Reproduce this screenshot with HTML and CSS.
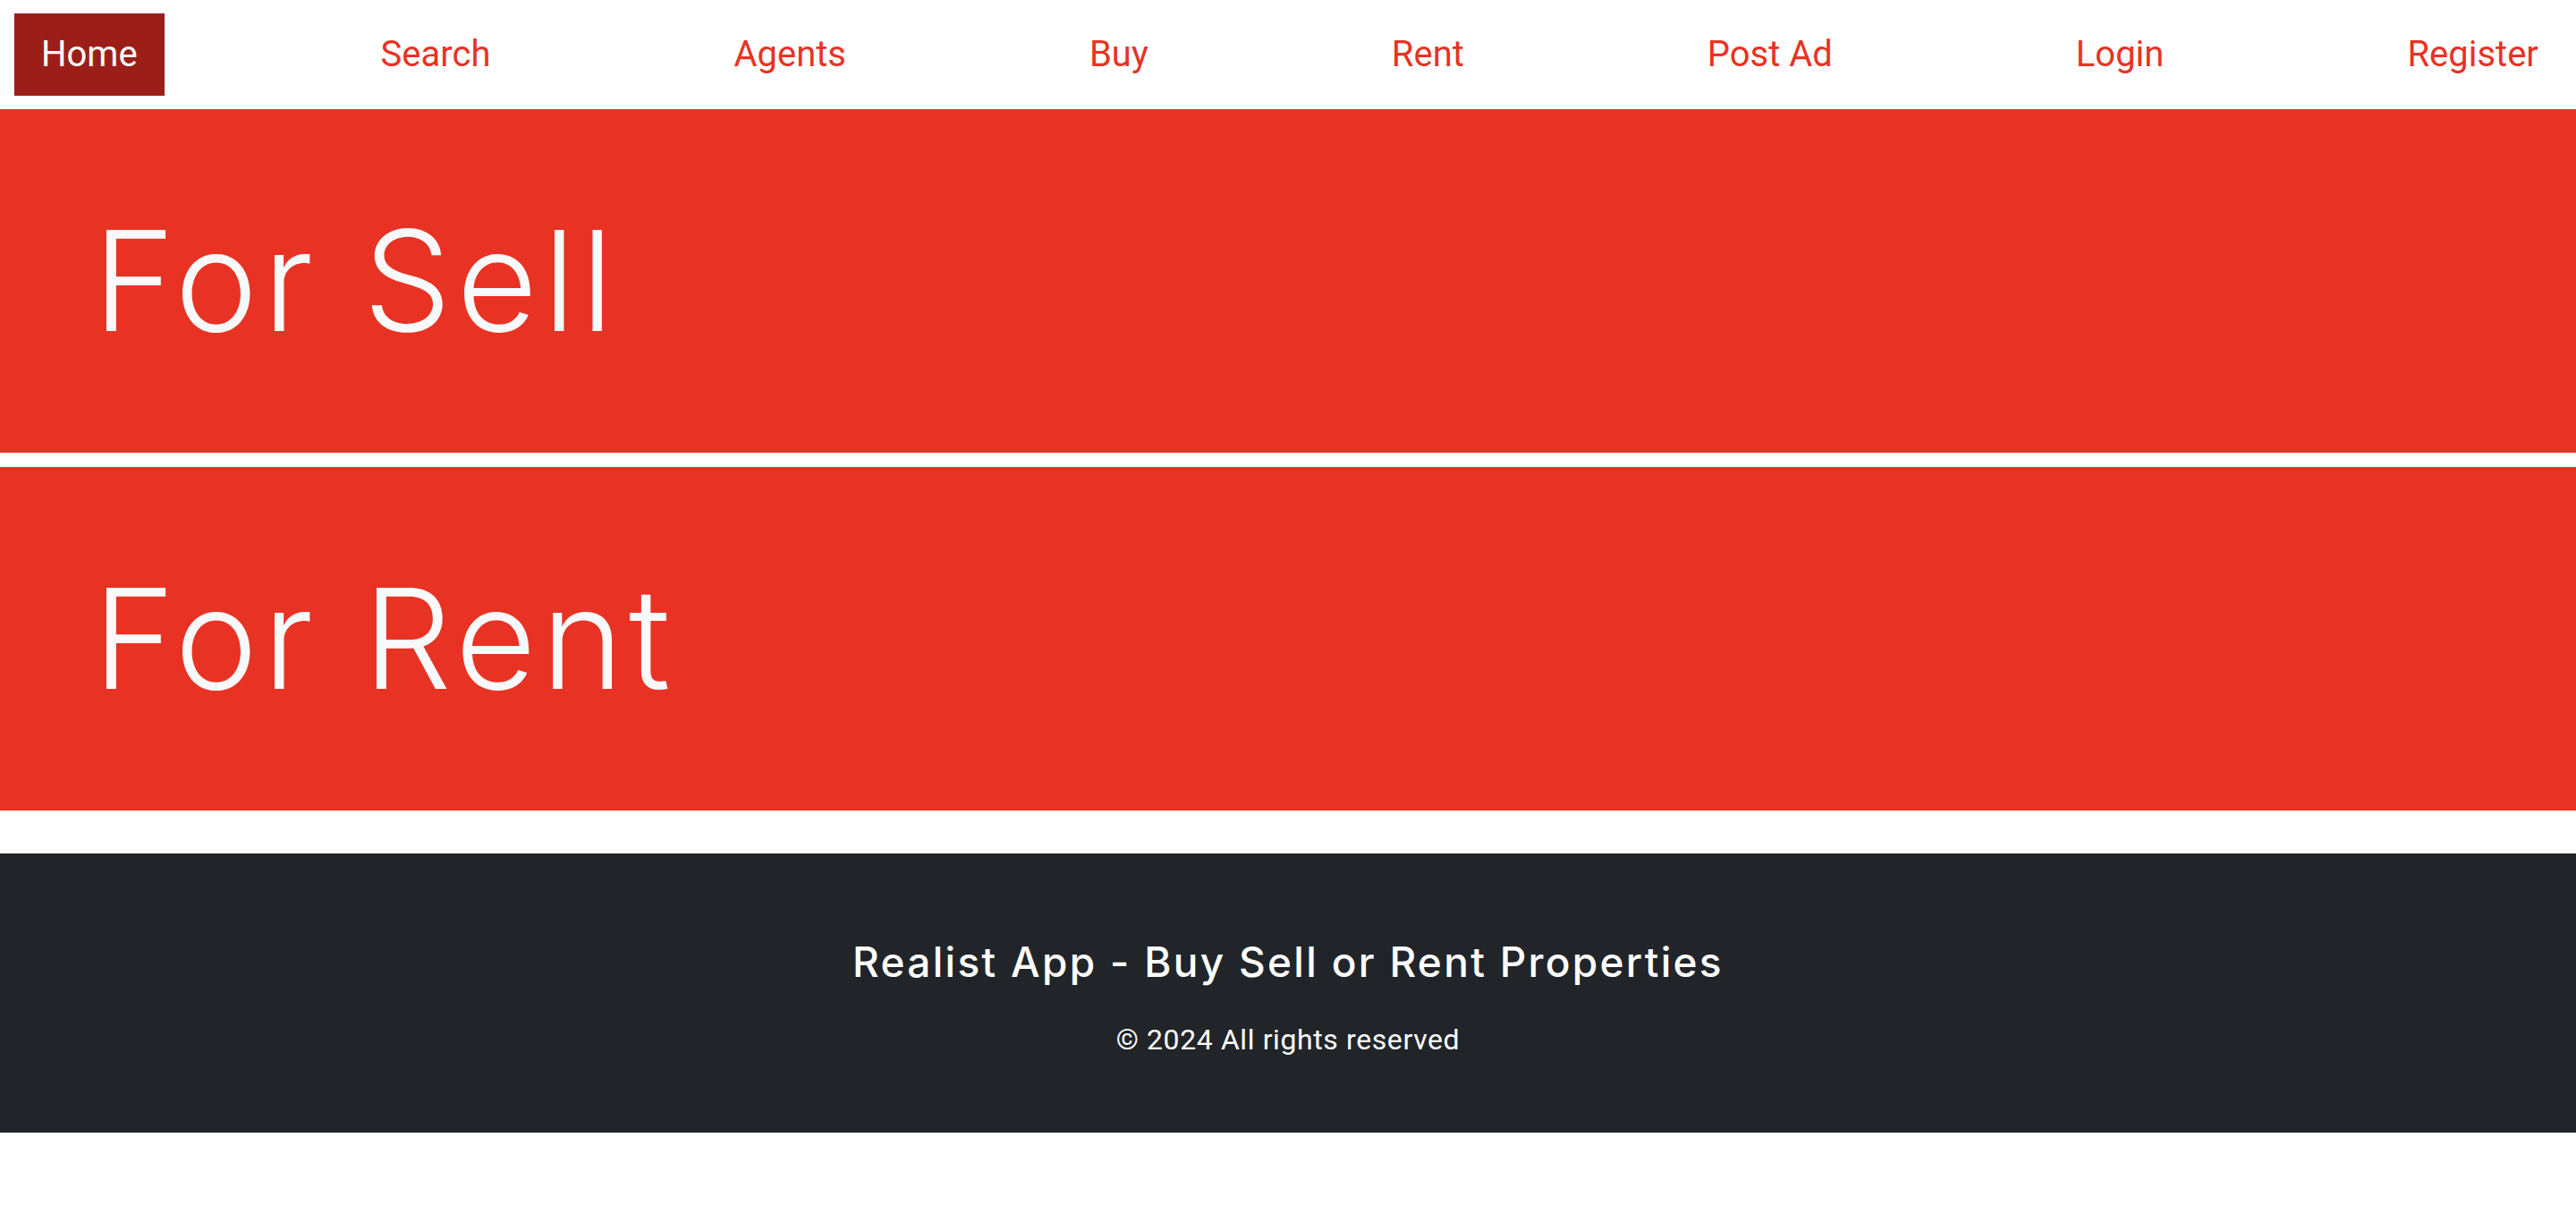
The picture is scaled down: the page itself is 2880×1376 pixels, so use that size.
FILE: index.html
```html
<!DOCTYPE html>
<html lang="en">
<head>
<meta charset="utf-8">
<title>Realist App</title>
<link rel="stylesheet" href="styles.css">
</head>
<body>
<nav class="topnav">
  <a class="nav-link active" href="#">Home</a>
  <a class="nav-link" href="#">Search</a>
  <a class="nav-link" href="#">Agents</a>
  <a class="nav-link" href="#">Buy</a>
  <a class="nav-link" href="#">Rent</a>
  <a class="nav-link" href="#">Post Ad</a>
  <a class="nav-link" href="#">Login</a>
  <a class="nav-link" href="#">Register</a>
</nav>
<main class="content">
  <section class="band">
    <h1 class="band-title">For Sell</h1>
  </section>
  <section class="band">
    <h1 class="band-title">For Rent</h1>
  </section>
</main>
<footer class="footer">
  <h4 class="footer-title">Realist App - Buy Sell or Rent Properties</h4>
  <p class="footer-copy">© 2024 All rights reserved</p>
</footer>
</body>
</html>
```

FILE: styles.css
```css
html, body {
  margin: 0;
  padding: 0;
  background: #ffffff;
}

body {
  font-family: "Liberation Sans", Arial, sans-serif;
}

.topnav {
  display: flex;
  justify-content: space-between;
  align-items: center;
  padding: 15px 12px 15px 16px;
  height: 92px;
}

.nav-link {
  display: block;
  padding: 16px 30px;
  font-family: Roboto, "Liberation Sans", sans-serif;
  font-size: 40px;
  line-height: 60px;
  color: #e83324;
  text-decoration: none;
}

.nav-link.active {
  background: #9b1f18;
  color: #ffffff;
}

.content {
  display: flex;
  flex-direction: column;
  gap: 16px;
}

.band {
  background: #e83324;
  height: 384px;
  display: flex;
  align-items: center;
  padding-left: 104px;
}

.band-title {
  margin: 0;
  font-family: Inter, "Open Sans", sans-serif;
  font-weight: 300;
  font-size: 156px;
  line-height: 1;
  color: #f8f9fa;
  letter-spacing: 6px;
}

.footer {
  margin-top: 48px;
  background: #212529;
  height: 312px;
  box-sizing: border-box;
  padding-top: 92px;
  text-align: center;
  color: #ffffff;
}

.footer-title {
  margin: 0;
  font-family: Inter, "Open Sans", sans-serif;
  font-weight: 500;
  font-size: 46px;
  line-height: 58px;
  letter-spacing: 2.3px;
}

.footer-copy {
  margin: 34px 0 0;
  font-family: Roboto, "Liberation Sans", sans-serif;
  font-size: 32px;
  line-height: 48px;
  letter-spacing: 0.6px;
}
```
